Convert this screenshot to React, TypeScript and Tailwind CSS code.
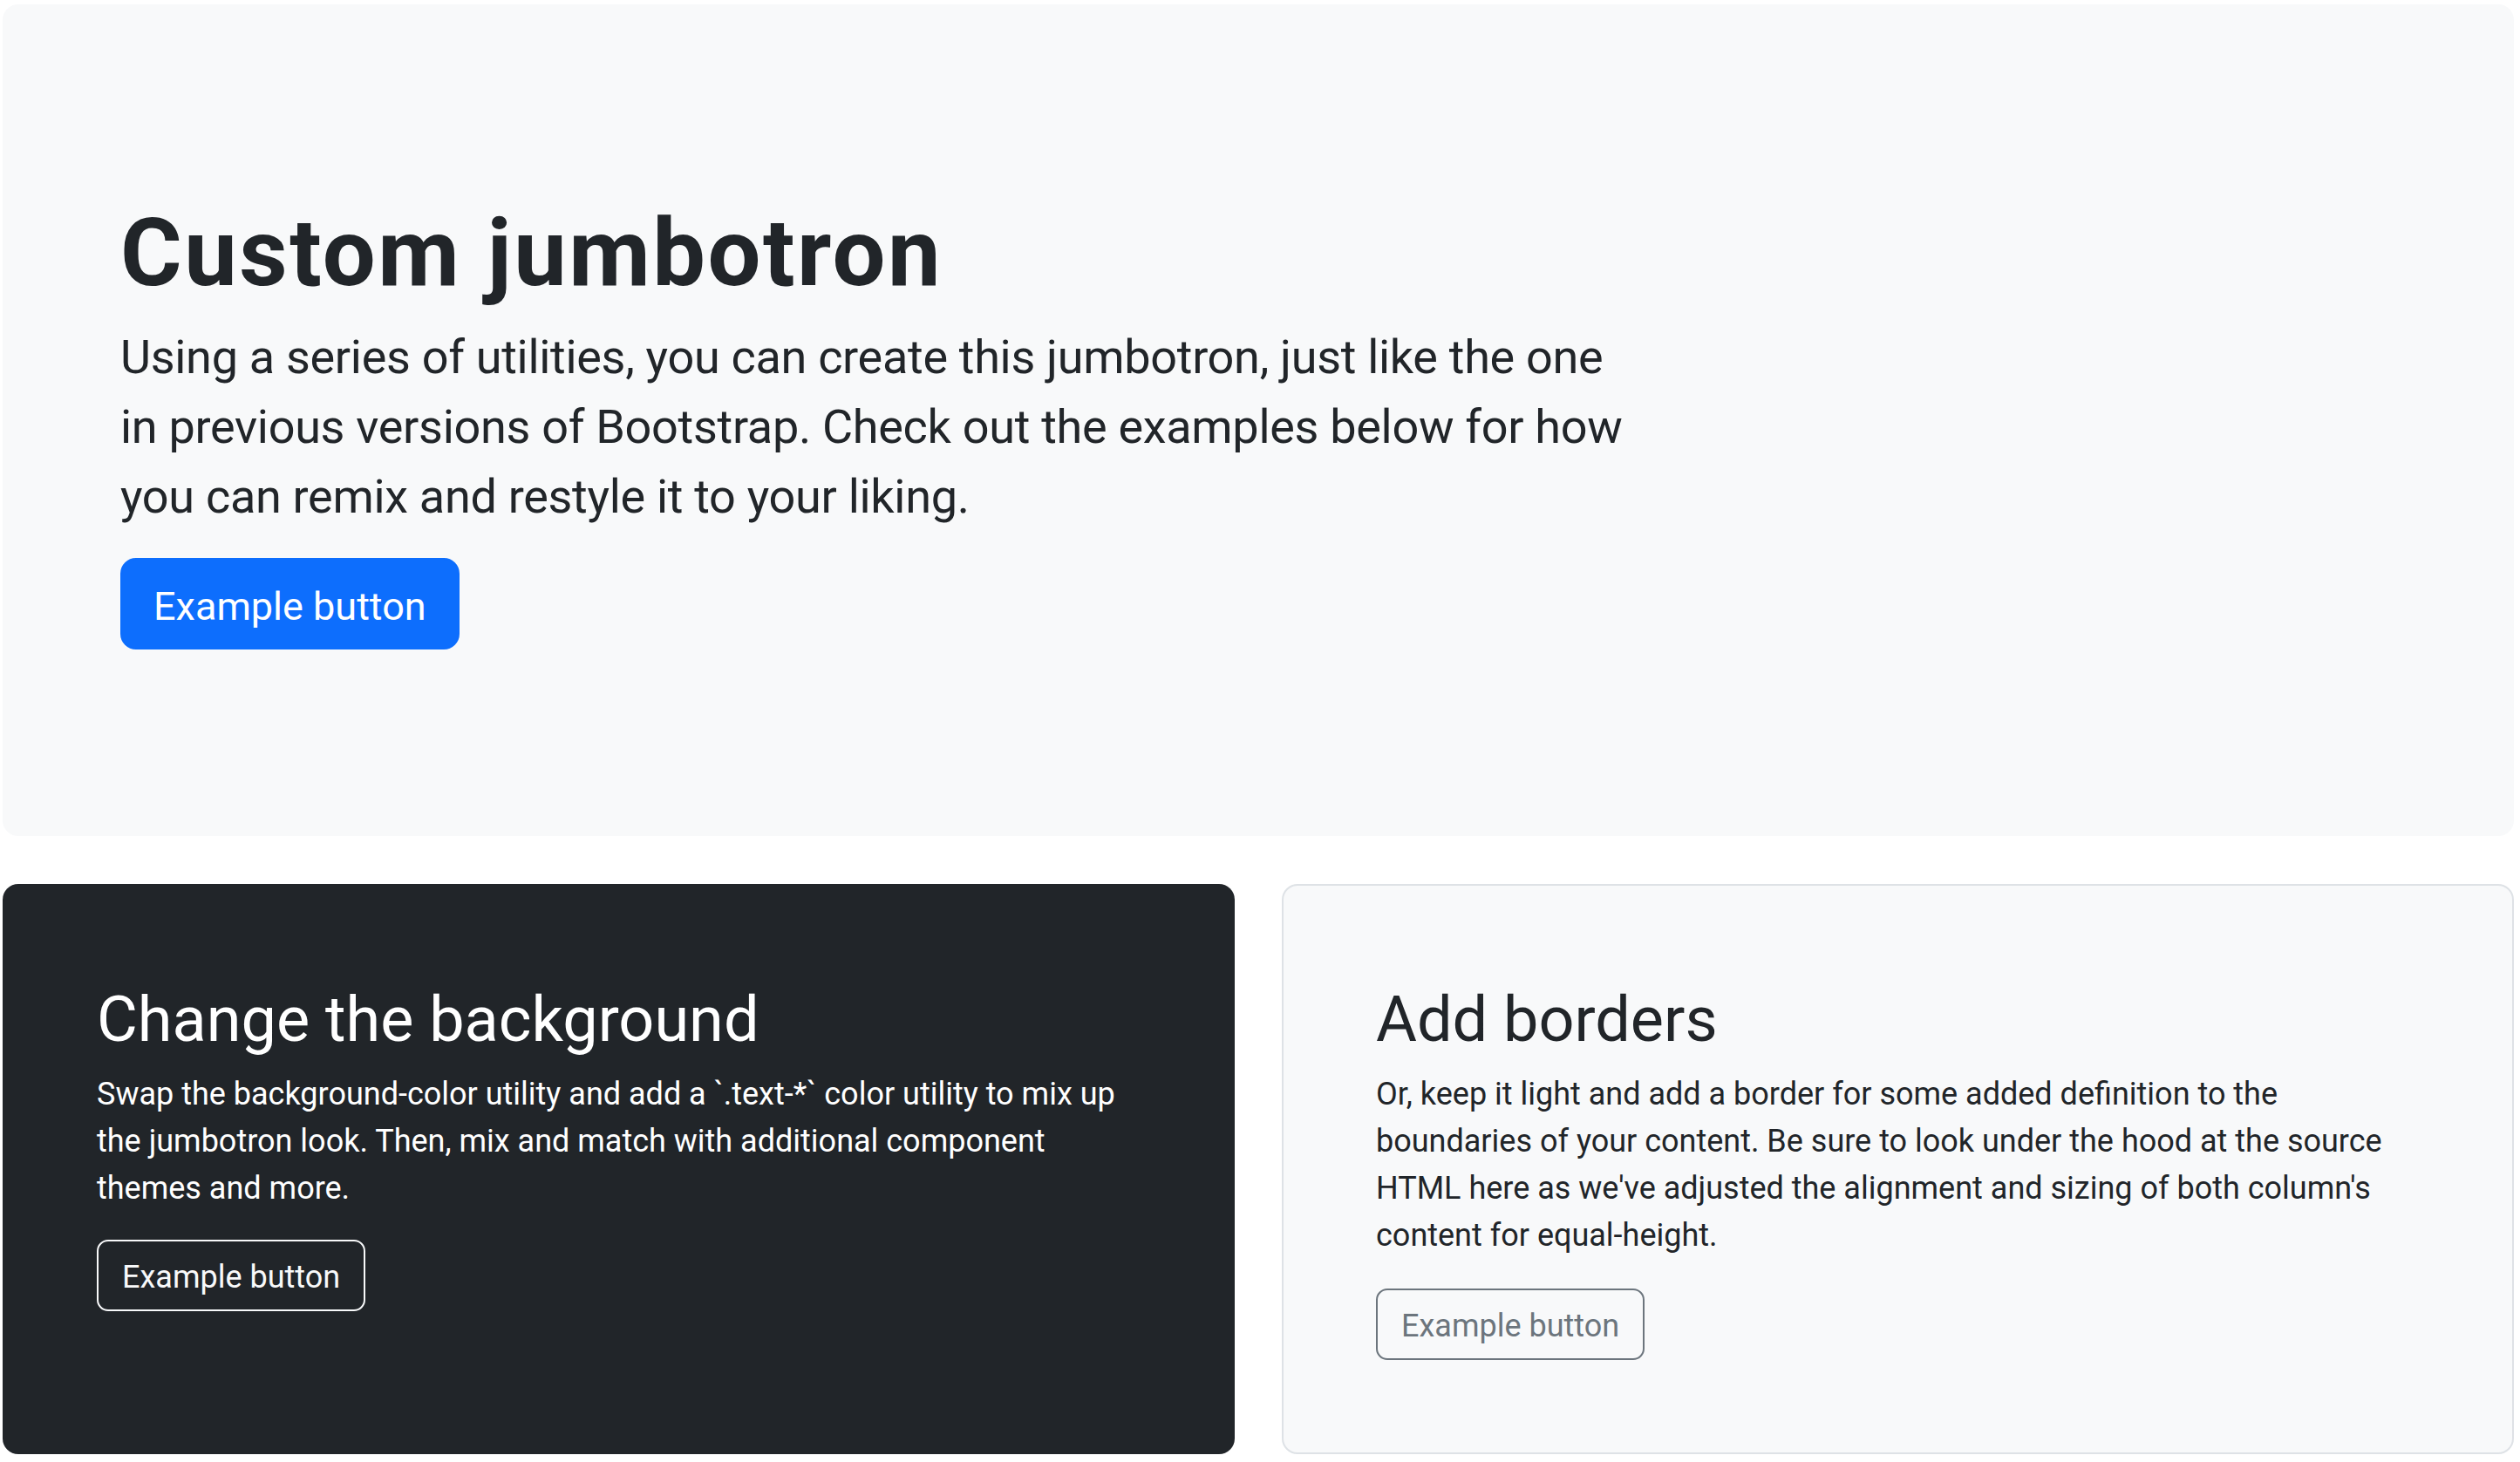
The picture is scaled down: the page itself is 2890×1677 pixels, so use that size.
export default function App() {
  return (
    <div className="min-h-screen bg-white font-['Roboto',sans-serif] text-[#212529]">
      <div className="ml-[3px] w-[2880px] pt-[5px]">
        <div className="mb-[55px] rounded-[18px] bg-[#f8f9fa] p-[108px]">
          <div className="px-[27px] py-[106px]">
            <h1 className="mb-[11px] pt-[7px] text-[108px] font-bold leading-[1.2] tracking-[2.5px]">
              Custom jumbotron
            </h1>
            <p className="mb-[30px] whitespace-nowrap pt-[3px] text-[54px] leading-[80px] tracking-[-0.3px]">
              Using a series of utilities, you can create this jumbotron, just like the one
              <br />
              in previous versions of Bootstrap. Check out the examples below for how
              <br />
              you can remix and restyle it to your liking.
            </p>
            <button
              type="button"
              className="rounded-[18px] border-2 border-[#0d6efd] bg-[#0d6efd] px-[36px] pb-[14px] pt-[20px] text-[45px] leading-[1.5] text-white"
            >
              Example button
            </button>
          </div>
        </div>

        <div className="grid grid-cols-2 gap-[54px]">
          <div className="h-full rounded-[18px] bg-[#212529] p-[108px] text-white">
            <h2 className="mb-[13px] pt-[5px] text-[72px] font-normal leading-[1.2]">Change the background</h2>
            <p className="mb-[32px] whitespace-nowrap pt-[2px] text-[36px] leading-[54px]">
              Swap the background-color utility and add a `.text-*` color utility to mix up
              <br />
              the jumbotron look. Then, mix and match with additional component
              <br />
              themes and more.
            </p>
            <button
              type="button"
              className="rounded-[13px] border-2 border-[#f8f9fa] px-[27px] pb-[10px] pt-[14px] text-[36px] leading-[54px] text-[#f8f9fa]"
            >
              Example button
            </button>
          </div>

          <div className="h-full rounded-[18px] border-2 border-[#dee2e6] bg-[#f8f9fa] p-[106px]">
            <h2 className="mb-[13px] pt-[5px] text-[72px] font-normal leading-[1.2]">Add borders</h2>
            <p className="mb-[34px] whitespace-nowrap pt-[2px] text-[36px] leading-[54px]">
              Or, keep it light and add a border for some added definition to the
              <br />
              boundaries of your content. Be sure to look under the hood at the source
              <br />
              HTML here as we've adjusted the alignment and sizing of both column's
              <br />
              content for equal-height.
            </p>
            <button
              type="button"
              className="rounded-[13px] border-2 border-[#6c757d] px-[27px] pb-[10px] pt-[14px] text-[36px] leading-[54px] text-[#6c757d]"
            >
              Example button
            </button>
          </div>
        </div>
      </div>
    </div>
  );
}
